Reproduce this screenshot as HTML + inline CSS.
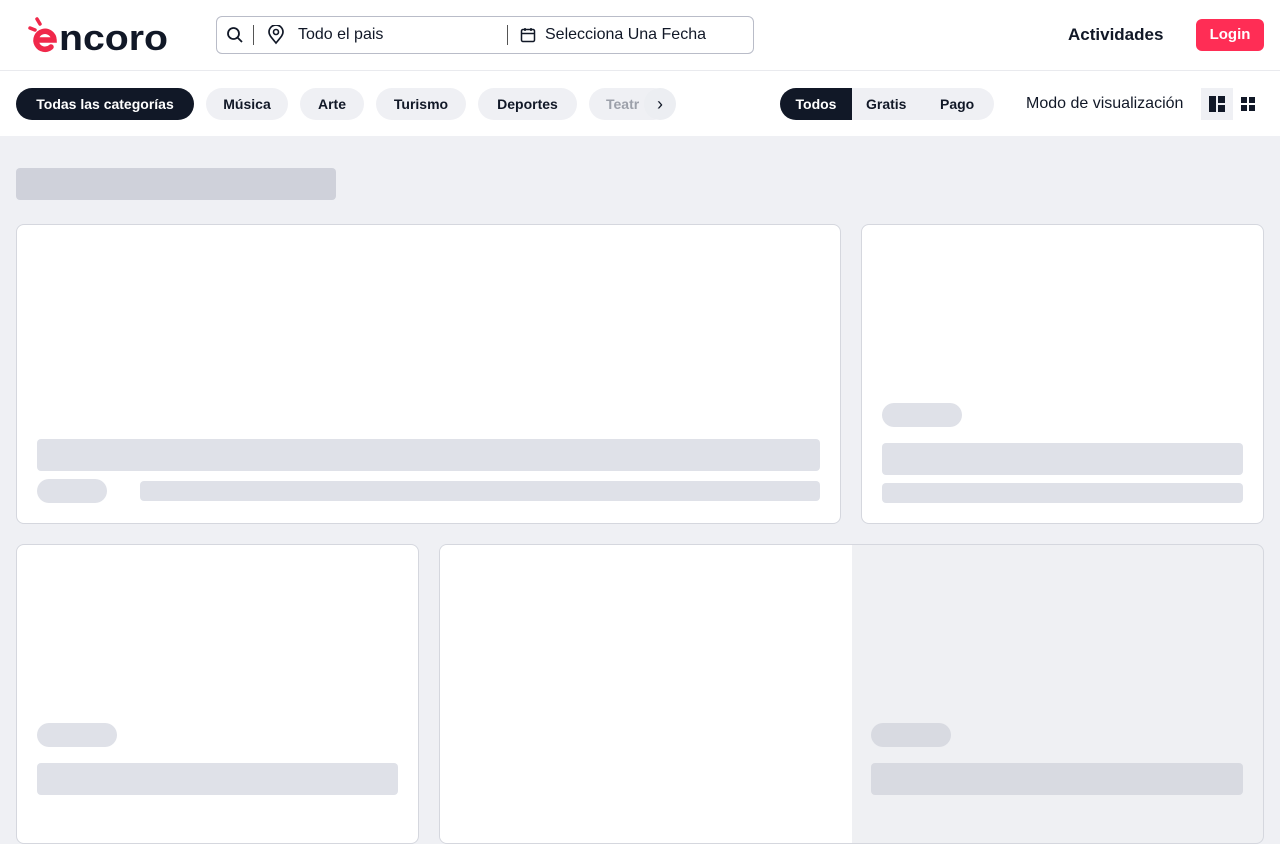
<!DOCTYPE html><html><head><style>
*{box-sizing:border-box;margin:0;padding:0}
body{width:1280px;height:800px;overflow:hidden;background:#eff0f4;font-family:"Liberation Sans",sans-serif;color:#111827;position:relative}
.a{position:absolute}
.hdr{left:0;top:0;width:1280px;height:136px;background:#fff}
.line{left:0;top:70px;width:1280px;height:1px;background:#e9eaee}
.pill{position:absolute;top:88px;height:32px;border-radius:16px;background:#eff0f4;font-size:14px;font-weight:bold;line-height:32px;text-align:center;color:#111827}
.sk{position:absolute;background:#dfe1e8;border-radius:4px}
.card{position:absolute;background:#fff;border:1px solid #d5d7de;border-radius:8px;overflow:hidden}
</style></head><body>
<div class="a hdr"></div><div class="a line"></div>
<svg class="a" style="left:26px;top:16px" width="145" height="38" viewBox="0 0 145 38">
<g stroke="#f0284a" stroke-width="3.5" stroke-linecap="round"><line x1="4" y1="12" x2="9" y2="14"/><line x1="11" y1="3" x2="14" y2="8"/></g>
<path d="M12 24 h16 a9 9 0 1 0 -3 7" fill="none" stroke="#f0284a" stroke-width="5.5" stroke-linecap="round"/>
<text x="33" y="34" font-family="Liberation Sans" font-weight="bold" font-size="36" fill="#111827" textLength="109" lengthAdjust="spacingAndGlyphs">ncoro</text></svg>
<div class="a" style="left:216px;top:16px;width:538px;height:38px;border:1px solid #b9bcc8;border-radius:6px"></div>
<svg class="a" style="left:226px;top:26px" width="18" height="18" viewBox="0 0 18 18"><circle cx="7.5" cy="7.5" r="5.5" fill="none" stroke="#111827" stroke-width="1.8"/><line x1="11.5" y1="11.5" x2="16" y2="16" stroke="#111827" stroke-width="1.8"/></svg>
<div class="a" style="left:253px;top:25px;width:1px;height:20px;background:#555"></div>
<svg class="a" style="left:267px;top:25px" width="18" height="20" viewBox="0 0 18 20"><path d="M9 18 C4 12 2 10 2 7 a7 7 0 0 1 14 0 c0 3 -2 5 -7 11z" fill="none" stroke="#111827" stroke-width="1.7"/><circle cx="9" cy="7" r="2.5" fill="none" stroke="#111827" stroke-width="1.6"/></svg>
<div class="a" style="left:298px;top:25px;font-size:16px;line-height:20px">Todo el pais</div>
<div class="a" style="left:507px;top:25px;width:1px;height:20px;background:#555"></div>
<svg class="a" style="left:520px;top:27px" width="16" height="16" viewBox="0 0 16 16"><rect x="1.5" y="2.5" width="13" height="12" rx="1.5" fill="none" stroke="#111827" stroke-width="1.5"/><line x1="1.5" y1="6.5" x2="14.5" y2="6.5" stroke="#111827" stroke-width="1.5"/><line x1="5" y1="1" x2="5" y2="4" stroke="#111827" stroke-width="1.5"/><line x1="11" y1="1" x2="11" y2="4" stroke="#111827" stroke-width="1.5"/></svg>
<div class="a" style="left:545px;top:25px;font-size:16px;line-height:20px">Selecciona Una Fecha</div>
<div class="a" style="left:1068px;top:24px;font-size:17px;font-weight:bold;line-height:22px">Actividades</div>
<div class="a" style="left:1196px;top:19px;width:68px;height:32px;background:#ff2d55;border-radius:6px;color:#fff;font-weight:bold;font-size:15px;line-height:32px;text-align:center">Login</div>
<div class="pill" style="left:16px;width:178px;background:#111827;color:#fff">Todas las categorías</div>
<div class="pill" style="left:206px;width:82px">Música</div>
<div class="pill" style="left:300px;width:64px">Arte</div>
<div class="pill" style="left:376px;width:90px">Turismo</div>
<div class="pill" style="left:478px;width:99px">Deportes</div>
<div class="pill" style="left:589px;width:80px;text-align:left;padding-left:17px;color:#9ca0aa">Teatr</div>
<div class="pill" style="left:644px;width:32px;font-weight:normal;font-size:18px;background:#eceef2">›</div>
<div class="pill" style="left:780px;width:214px"></div>
<div class="pill" style="left:780px;width:72px;background:#111827;color:#fff;border-radius:16px 0 0 16px">Todos</div>
<div class="a" style="left:866px;top:88px;line-height:32px;font-size:14px;font-weight:bold">Gratis</div>
<div class="a" style="left:940px;top:88px;line-height:32px;font-size:14px;font-weight:bold">Pago</div>
<div class="a" style="left:1026px;top:93px;font-size:16px;line-height:22px">Modo de visualización</div>
<div class="a" style="left:1201px;top:88px;width:32px;height:32px;background:#eff0f4"></div>
<svg class="a" style="left:1209px;top:96px" width="16" height="16"><rect x="0" y="0" width="7" height="16" fill="#111827"/><rect x="9" y="0" width="7" height="7" fill="#111827"/><rect x="9" y="9" width="7" height="7" fill="#111827"/></svg>
<svg class="a" style="left:1241px;top:97px" width="14" height="14"><rect x="0" y="0" width="6" height="6" fill="#111827"/><rect x="8" y="0" width="6" height="6" fill="#111827"/><rect x="0" y="8" width="6" height="6" fill="#111827"/><rect x="8" y="8" width="6" height="6" fill="#111827"/></svg>
<div class="sk" style="left:16px;top:168px;width:320px;height:32px;background:#cfd1da"></div>
<div class="card" style="left:16px;top:224px;width:825px;height:300px"></div>
<div class="sk" style="left:37px;top:439px;width:783px;height:32px"></div>
<div class="sk" style="left:37px;top:479px;width:70px;height:24px;border-radius:12px"></div>
<div class="sk" style="left:140px;top:481px;width:680px;height:20px"></div>
<div class="card" style="left:861px;top:224px;width:403px;height:300px"></div>
<div class="sk" style="left:882px;top:403px;width:80px;height:24px;border-radius:12px"></div>
<div class="sk" style="left:882px;top:443px;width:361px;height:32px"></div>
<div class="sk" style="left:882px;top:483px;width:361px;height:20px"></div>
<div class="card" style="left:16px;top:544px;width:403px;height:300px"></div>
<div class="sk" style="left:37px;top:723px;width:80px;height:24px;border-radius:12px"></div>
<div class="sk" style="left:37px;top:763px;width:361px;height:32px"></div>
<div class="card" style="left:439px;top:544px;width:825px;height:300px;background:#eff0f3"><div style="position:absolute;left:0;top:0;width:412px;height:300px;background:#fff"></div></div>
<div class="sk" style="left:871px;top:723px;width:80px;height:24px;border-radius:12px;background:#d8dae1"></div>
<div class="sk" style="left:871px;top:763px;width:372px;height:32px;background:#d8dae1"></div>
</body></html>
